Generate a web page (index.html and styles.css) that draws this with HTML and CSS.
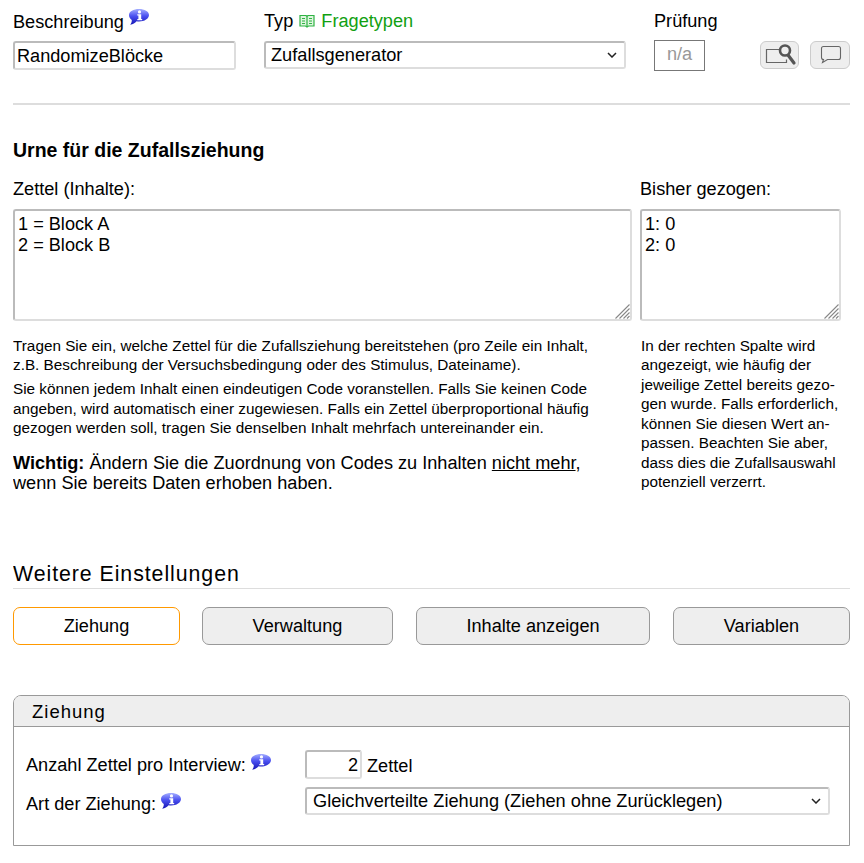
FILE: index.html
```html
<!DOCTYPE html>
<html lang="de">
<head>
<meta charset="utf-8">
<title>Zufallsgenerator</title>
<link rel="stylesheet" href="styles.css">
</head>
<body>
<svg class="defs" width="0" height="0" aria-hidden="true">
  <defs>
    <linearGradient id="infoGrad" x1="0" y1="0" x2="0" y2="1">
      <stop offset="0" stop-color="#a3adff"/>
      <stop offset="0.45" stop-color="#4a50f0"/>
      <stop offset="1" stop-color="#1414b4"/>
    </linearGradient>
    <symbol id="info" viewBox="0 0 20 16">
      <path d="M10 0C15.500 0 20 2.400 20 6S15.500 12.500 10 12.500c-.8 0-1.600 0-2.400-.2C6 14 4 15.300 1.200 15.800c1-1.300 1.600-2.800 1.600-4.800C1 9.800 0 8 0 6 0 2.400 4.500 0 10 0Z" fill="url(#infoGrad)"/>
      <circle cx="10.500" cy="2.900" r="1.600" fill="#fff"/>
      <path d="M8.300 5.300h3.900v4.700h1v1.300H8.300V10h1.100V6.500H8.300Z" fill="#fff"/>
    </symbol>
  </defs>
</svg>
<main class="page">
  <section class="top">
    <div class="field field-desc">
      <div class="label">Beschreibung <svg class="info"><use href="#info"/></svg></div>
      <input class="input desc-input" type="text" value="RandomizeBlöcke">
    </div>
    <div class="field field-type">
      <div class="label">Typ
        <svg class="book" viewBox="0 0 16 14"><path d="M1 1.500h6l1 1 1-1h6v10.500H9.500l-1.500 1-1.500-1H1Z" fill="#dff5df" stroke="#2fb344" stroke-width="1.200"/><path d="M8 2.500v10M3 4.500h3M3 7h3M3 9.500h3M10 4.500h3M10 7h3M10 9.500h3" stroke="#2fb344" stroke-width="1.200" fill="none"/></svg>
        <a class="link" href="#">Fragetypen</a>
      </div>
      <select class="input type-select"><option>Zufallsgenerator</option></select>
    </div>
    <div class="field field-check">
      <div class="label">Prüfung</div>
      <div class="check-box">n/a</div>
    </div>
    <div class="tools">
      <button class="tool" type="button" aria-label="Vorschau">
        <svg viewBox="0 0 37 26" width="37" height="26"><path d="M20 7.500H5.500v13h20v-3" fill="none" stroke="#666" stroke-width="1.200"/><path d="M27 13l6 8" stroke="#555" stroke-width="3.200" stroke-linecap="round"/><circle cx="24" cy="8.500" r="5" fill="#eee" stroke="#555" stroke-width="2.600"/></svg>
      </button>
      <button class="tool" type="button" aria-label="Kommentar">
        <svg viewBox="0 0 38 26" width="38" height="26"><path d="M12.500 4.500h15a2 2 0 0 1 2 2v9a2 2 0 0 1-2 2H16.500l-5 3 1-3a2 2 0 0 1-2-2v-9a2 2 0 0 1 2-2Z" fill="none" stroke="#666" stroke-width="1.100"/></svg>
      </button>
    </div>
  </section>

  <hr class="rule">

  <h2 class="urn-title">Urne für die Zufallsziehung</h2>
  <section class="urn">
    <div class="urn-main">
      <div class="urn-label">Zettel (Inhalte):</div>
      <textarea class="area">1 = Block A
2 = Block B</textarea>
      <p class="note note-first">Tragen Sie ein, welche Zettel für die Zufallsziehung bereitstehen (pro Zeile ein Inhalt, z.B. Beschreibung der Versuchsbedingung oder des Stimulus, Dateiname).</p>
      <p class="note note-second">Sie können jedem Inhalt einen eindeutigen Code voranstellen. Falls Sie keinen Code angeben, wird automatisch einer zugewiesen. Falls ein Zettel überproportional häufig gezogen werden soll, tragen Sie denselben Inhalt mehrfach untereinander ein.</p>
      <p class="warn"><strong>Wichtig:</strong> Ändern Sie die Zuordnung von Codes zu Inhalten <u>nicht mehr</u>, wenn Sie bereits Daten erhoben haben.</p>
    </div>
    <div class="urn-side">
      <div class="urn-label">Bisher gezogen:</div>
      <textarea class="area">1: 0
2: 0</textarea>
      <p class="note side-note">In der rechten Spalte wird angezeigt, wie häufig der jeweilige Zettel bereits gezo-<br>gen wurde. Falls erforderlich, können Sie diesen Wert an-<br>passen. Beachten Sie aber, dass dies die Zufallsauswahl potenziell verzerrt.</p>
    </div>
  </section>

  <h2 class="more-title">Weitere Einstellungen</h2>
  <nav class="tabs">
    <button class="tab tab-active t1" type="button">Ziehung</button>
    <button class="tab t2" type="button">Verwaltung</button>
    <button class="tab t3" type="button">Inhalte anzeigen</button>
    <button class="tab t4" type="button">Variablen</button>
  </nav>

  <section class="panel">
    <h3 class="panel-head">Ziehung</h3>
    <div class="panel-body">
      <div class="row">
        <div class="row-label">Anzahl Zettel pro Interview: <svg class="info"><use href="#info"/></svg></div>
        <div class="row-value"><input class="input count" type="text" value="2"> Zettel</div>
      </div>
      <div class="row">
        <div class="row-label row-label-low">Art der Ziehung: <svg class="info"><use href="#info"/></svg></div>
        <div class="row-value"><select class="input art"><option>Gleichverteilte Ziehung (Ziehen ohne Zurücklegen)</option></select></div>
      </div>
    </div>
  </section>
</main>
</body>
</html>
```

FILE: styles.css
```css
* { box-sizing: border-box; }
html, body { margin: 0; background: #fff; }
body { font-family: "Liberation Sans", Arial, sans-serif; font-size: 18.15px; color: #000; }
.defs { position: absolute; }
.page { width: 837px; margin-left: 13px; padding-top: 9px; height: 863px; overflow: hidden; }

.top { display: flex; height: 62px; }
.field { display: flex; flex-direction: column; }
.field-desc { width: 251px; }
.field-type { width: 390px; }
.field-check { width: 106px; }
.label { height: 31px; line-height: 24px; white-space: nowrap; }
.info { width: 20px; height: 16px; vertical-align: 3px; margin-left: 0; }
.book { width: 16px; height: 14px; vertical-align: -1px; margin: 0 1px; }
.link { color: #11a011; text-decoration: none; }

.input {
  font: 18.15px "Liberation Sans", Arial, sans-serif;
  color: #000;
  background-color: #fff;
  border: 2px solid;
  border-color: #bbb #ddd #ddd #bbb;
  border-radius: 3px;
  outline: none;
}
select.input {
  appearance: none;
  font-size: 18.2px;
  background-image: url("data:image/svg+xml,%3Csvg xmlns='http://www.w3.org/2000/svg' width='10' height='6' viewBox='0 0 10 6'%3E%3Cpath d='M1 1l4 4 4-4' fill='none' stroke='%23222' stroke-width='1.500'/%3E%3C/svg%3E");
  background-repeat: no-repeat;
  background-position: right 7px center;
}
.desc-input { width: 223px; height: 29px; padding: 1px 2px 0; margin-top: 1px; }
.type-select { width: 362px; height: 28px; padding: 0 5px; margin-top: 1px; }
.check-box {
  width: 51px; height: 31px; border: 1px solid #777;
  color: #999; text-align: center; line-height: 26px;
}
.tools { display: flex; gap: 11px; padding-top: 32px; margin-left: auto; }
.tool {
  width: 39px; height: 28px; padding: 0; margin: 0;
  display: flex; align-items: center; justify-content: center;
  background: #eee; border: 1px solid #ccc; border-radius: 6px;
}
.tool + .tool { width: 40px; }

.rule { height: 2px; border: 0; background: #ddd; margin: 32px 0 0; }

.urn-title { font-size: 19.5px; line-height: 24px; font-weight: bold; margin: 33px 0 0; }
.urn { display: flex; gap: 8px; margin-top: 15px; }
.urn-main { width: 619px; }
.urn-side { width: 201px; }
.urn-label { line-height: 24px; height: 24px; margin-bottom: 8px; }
.area {
  display: block; width: 100%; height: 112px; margin: 0; padding: 3px 3px;
  font: 18.15px/21px "Liberation Sans", Arial, sans-serif;
  border: 2px solid; border-color: #bbb #ddd #ddd #bbb; border-radius: 3px;
  outline: none; color: #000;
}
.area::-webkit-resizer {
  background-image: url("data:image/svg+xml,%3Csvg xmlns='http://www.w3.org/2000/svg' width='15' height='15' viewBox='0 0 15 15'%3E%3Cpath d='M14.500 .5L.5 14.500M14.500 4.500l-10 10M14.500 8.500l-6 6M14.500 12l-2.500 2.500' stroke='%23888' stroke-width='1.100' fill='none'/%3E%3C/svg%3E");
  background-repeat: no-repeat;
}
.note { font-size: 15.3px; line-height: 19.5px; margin: 0; width: 586px; }
.note-first { margin-top: 14.5px; }
.note-second { margin-top: 4.5px; }
.warn { font-size: 18.15px; line-height: 20.5px; margin: 15px 0 0; width: 590px; }
.side-note { width: 200px; margin-top: 14.5px; padding-left: 1px; }

.more-title {
  font-size: 21.3px; font-weight: normal; letter-spacing: 0.95px; line-height: 26px;
  margin: 67px 0 0; padding-bottom: 1px; border-bottom: 1px solid #ddd;
}
.tabs { display: flex; margin-top: 18px; }
.tab {
  height: 38px; padding: 2px 0 0;
  font: 18.15px "Liberation Sans", Arial, sans-serif; color: #000;
  background: #eee; border: 1px solid #999; border-radius: 7px;
}
.tab-active { background: #fff; border-color: #f90; }
.t1 { width: 167px; }
.t2 { width: 191px; margin-left: 22px; }
.t3 { width: 234px; margin-left: 23px; }
.t4 { width: 177px; margin-left: 23px; }

.panel { margin-top: 50px; border: 1px solid #999; border-radius: 8px 8px 0 0; height: 151px; }
.panel-head {
  margin: 0; height: 31px; padding-left: 18px;
  font-size: 18.5px; font-weight: normal; letter-spacing: 1px; line-height: 32px;
  background: #eee; border-bottom: 1px solid #999; border-radius: 7px 7px 0 0;
}
.panel-body { padding: 23px 19px 0 12px; display: flex; flex-direction: column; gap: 8px; }
.row { display: flex; align-items: flex-start; }
.row .info { vertical-align: 1px; }
.row-label { width: 279px; white-space: nowrap; line-height: 31px; height: 29px; }
.row-label-low { line-height: 24px; margin-top: 5px; height: 24px; }
.row-value { flex: 1; white-space: nowrap; line-height: 32px; height: 29px; }
.count { width: 57px; height: 29px; text-align: right; padding: 2px 2px 0; vertical-align: top; }
.art { width: 100%; height: 28px; padding: 0 6px; display: block; }
```
